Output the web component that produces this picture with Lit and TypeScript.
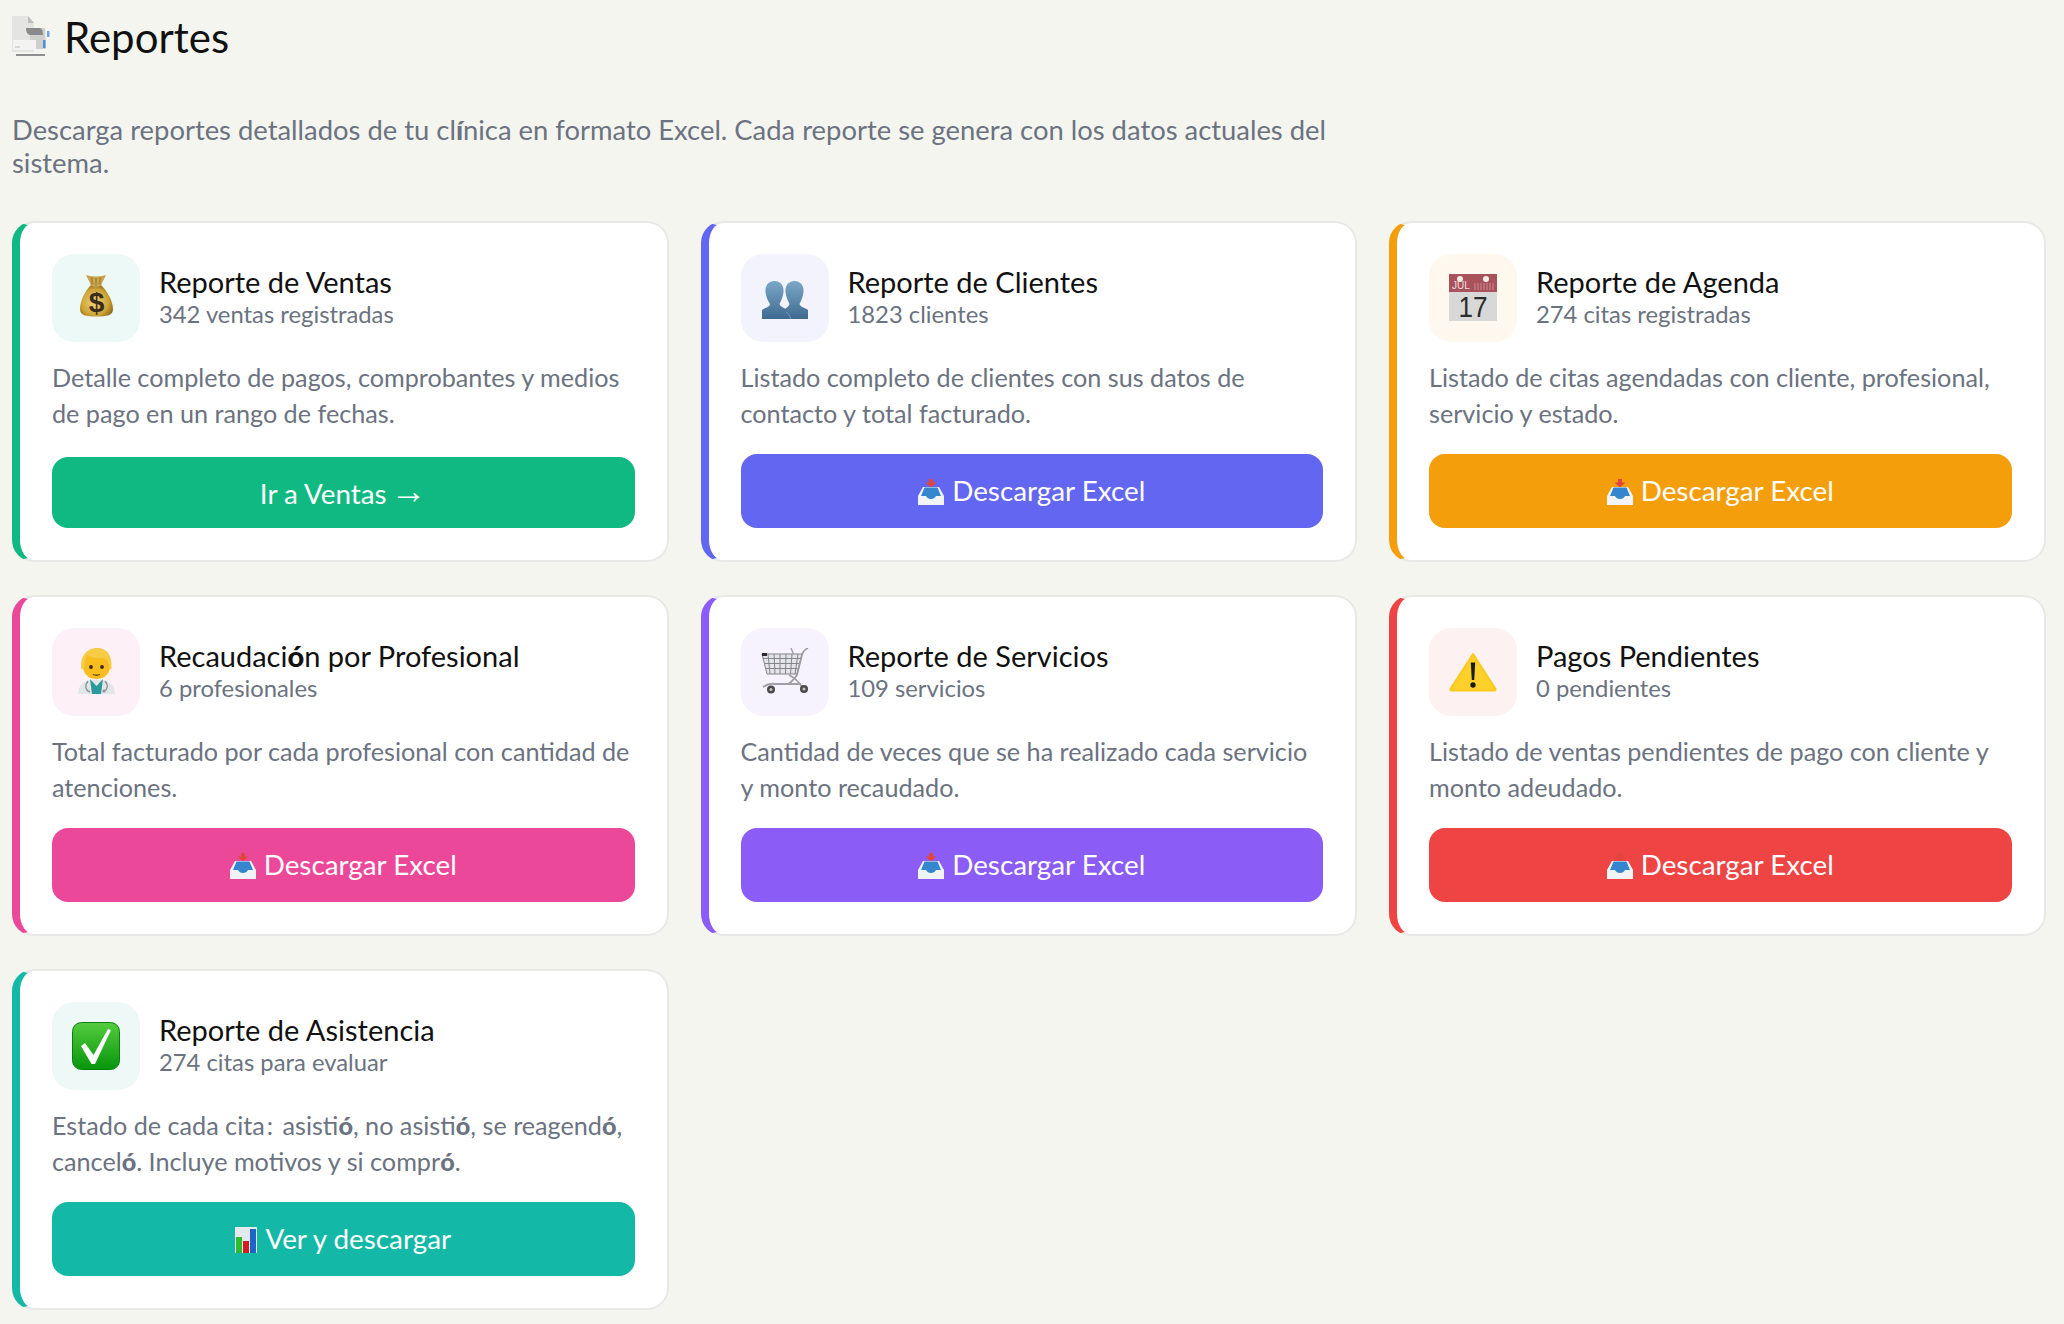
import { LitElement, html, css, svg, nothing } from "lit";
import { customElement } from "lit/decorators.js";

const fb = (s: string) =>
  s.split(/([óí:])/).map((p) =>
    p === ":" ? html`<span class="colon">:</span>` : p === "ó" || p === "í" ? html`<span class="fb">${p}</span>` : p
  );

const icons: Record<string, unknown> = {
  money: svg`<defs><radialGradient id="mb" cx="45%" cy="55%" r="60%"><stop offset="0" stop-color="#efd47c"/><stop offset=".7" stop-color="#cda235"/><stop offset="1" stop-color="#8f6a1a"/></radialGradient></defs>
    <path d="M14 1 Q24 4 34 1 L29 11 Q24 13 19 11Z" fill="#c9a24a"/><path d="M20 3v8M24 4v8M28 3v8" stroke="#8f6f2a" stroke-width=".8"/>
    <path d="M19 11 Q24 13.500 29 11 C34 16 41 26 41 35 C41 41.500 35 42.500 24.500 42.500 C14 42.500 8 41.500 8 35 C8 26 14 16 19 11Z" fill="url(#mb)"/>
    <text x="24.500" y="37.500" text-anchor="middle" font-family="Liberation Sans" font-weight="700" font-size="28" fill="#3a2c1c">$</text>`,
  people: svg`<defs><linearGradient id="pp" x1="0" y1="0" x2="0" y2="1"><stop offset="0" stop-color="#7ba8c8"/><stop offset="1" stop-color="#3f6a90"/></linearGradient></defs>
    <path d="M13.500 7 C20 7 23 12 22.500 18 C22 23 20 27 18.500 30 C19 33 25 34.500 26 36 V45 H1 V36 C3 34 9 33 9 30 C7 27 5 23 4.500 18 C4 12 7 7 13.500 7Z" fill="url(#pp)"/>
    <path d="M33.500 7 C40 7 43 12 42.500 18 C42 23 40 27 38.500 30 C39 33 45 34 47 36 V45 H21 V37 C23 35 28 33 28.500 30 C27 27 25 23 24.500 18 C24 12 27 7 33.500 7Z" fill="url(#pp)"/>
    <path d="M25 38 Q28 39 30 45" stroke="#8fb3cc" stroke-width=".6" fill="none"/>`,
  calendar: svg`<rect x="0" y="0" width="48" height="47" fill="#d8d8d9"/><rect x="0" y="0" width="48" height="18" fill="#a9525c"/>
    <circle cx="11" cy="5" r="3" fill="#f3ece4"/><circle cx="37" cy="5" r="3" fill="#f3ece4"/>
    <text x="3" y="15" font-family="Liberation Sans" font-size="10" fill="#f1dcdc">JUL</text>
    <path d="M26 9v7M29 9v7M32 9v7M35 9v7M38 9v7M41 9v7M44 9v7" stroke="#c98a92" stroke-width="1"/>
    <text x="24" y="43" text-anchor="middle" font-family="Liberation Sans" font-size="30" fill="#2c2c2c" textLength="29" lengthAdjust="spacingAndGlyphs">17</text>`,
  doctor: svg`<path d="M6 46 C6 38 11 33.500 18 32 L31 32 C38 33.500 43 38 43 46Z" fill="#e3e6e7"/><path d="M18 31 L24.500 38 L31 31 L29 46 L20 46Z" fill="#2d9a9a"/>
    <path d="M16 33 C12 38 14 43 18 44 M33 33 C37 38 35 42 32 43" stroke="#8a9299" stroke-width="1.300" fill="none"/><circle cx="32" cy="43" r="1.600" fill="#8a9299"/>
    <path d="M10.500 16 C10.500 7 17 2 25 2 C33 2 38.500 7 38.500 16 C38.500 25 33 31 24.500 31 C16 31 10.500 25 10.500 16Z" fill="#f9bd1f"/>
    <path d="M9.500 21 C7.500 7 16 0 25 0 C35 0 40.500 7 39.500 21 L37.500 21 C37 13 34 10 30 10 C24 11 19 9.500 15 7 C14 10 12.500 15 12 21Z" fill="#f6cb46"/>
    <circle cx="19" cy="19" r="1.900" fill="#3a2a14"/><circle cx="30" cy="19" r="1.900" fill="#3a2a14"/>
    <path d="M21 26.500 Q24.500 28 28 26.500" stroke="#6b4310" stroke-width="1.300" fill="none"/>`,
  cart: svg`<g stroke="#85858c" fill="none" stroke-width="1">
    <path d="M1 6 L41 6 L36 26 L6 26Z" fill="#e4e4ea"/>
    <path d="M7 6 L9 26M13 6 L14 26M19 6 L19 26M25 6 L24.500 26M31 6 L29.500 26M37 6 L34 26"/>
    <path d="M2 10.500 H40M3 15.500 H39M4.500 20.500 H37.500"/></g>
    <path d="M30 0 L32.500 6" stroke="#9a9aa0" stroke-width="1.300" fill="none"/>
    <path d="M47 0 Q42.500 2 41 7 L36 27 Q31 34 27 36" stroke="#9a9aa0" stroke-width="1.700" fill="none"/>
    <path d="M2 39 Q8 35 14 36 L40 36" stroke="#a0a0a6" stroke-width="1.900" fill="none"/>
    <path d="M28 27 Q36 31 41 39" stroke="#a0a0a6" stroke-width="1.700" fill="none"/>
    <rect x="1" y="5" width="5" height="3" fill="#2a2a30"/>
    <circle cx="10" cy="41.500" r="4" fill="#4a4a4c"/><circle cx="10" cy="41.500" r="1.500" fill="#c8c8c8"/>
    <circle cx="43" cy="41" r="4" fill="#4a4a4c"/><circle cx="43" cy="41" r="1.500" fill="#c8c8c8"/>`,
  warning: svg`<path d="M24 6 L46.500 41 Q47 42.500 45 42.500 L3 42.500 Q1 42.500 1.500 41 Z" fill="#fdd02a" stroke="#fbc91c" stroke-width="2" stroke-linejoin="round"/>
    <path d="M21.800 14.500 H26.200 L25.200 32 H22.800Z" fill="#1a1a1a"/><circle cx="24" cy="37" r="2.700" fill="#1a1a1a"/>`,
  check: svg`<defs><linearGradient id="ck" x1="0" y1="0" x2="0" y2="1"><stop offset="0" stop-color="#54cc3e"/><stop offset="1" stop-color="#08950c"/></linearGradient></defs>
    <rect x=".5" y=".5" width="47" height="47" rx="9" fill="url(#ck)" stroke="#0a7d10"/>
    <path d="M9 24 L13 21 L21.500 33 L36 7 L39 8 L23 42 L19.500 42Z" fill="#fff"/>`,
  inbox: svg`<path d="M11 0h4v3.500h3.500L13 8.500 7.500 3.500H11z" fill="#e2453c"/>
    <path d="M5 8 H21 L26 17 V26 H0 V17Z" fill="#f1f4f7"/>
    <path d="M6.500 8.500 H19.500 L23 17 H18 Q16.500 20 13 20 Q9.500 20 8 17 H3Z" fill="#3586cf"/>`,
  chart: svg`<rect width="22" height="26" fill="#e5e8ec"/><rect x="1" y="10" width="6" height="16" fill="#2fbb2f"/><rect x="8" y="14" width="6" height="12" fill="#d11f1f"/><rect x="15" y="2" width="6" height="24" fill="#1f63c4"/>`,
  header: svg`<path d="M0 0H16L22 7V36H0Z" fill="#e4e4e3"/><path d="M16 0L22 7H16Z" fill="#bdbdbc"/>
    <path d="M18 12H33L34 33H18Z" fill="#cfcfce"/><path d="M4 38H33V40H4Z" fill="#8f8f8f"/>
    <path d="M14 12H28Q31 13 31 19H18Q14 18 14 12Z" fill="#8a8a8a"/>
    <path d="M1 24H24V34H1Z" fill="#f3f3f2"/><path d="M3 31H8" stroke="#bbb" stroke-width="1"/>
    <rect x="35" y="15" width="2.500" height="6" fill="#6aa6e8"/><rect x="31" y="24" width="2.500" height="8" fill="#4d8fe0"/>`,
};

const ic = (name: string, w: number, h: number) =>
  html`<svg width=${w} height=${h} viewBox="0 0 ${w} ${h}" aria-hidden="true">${icons[name]}</svg>`;

interface Card { color: string; tint: string; icon: string; title: string; sub: string; desc: string; label: string; btn: string; link?: boolean; }

const cards: Card[] = [
  { color: "#10b981", tint: "#ecf9f6", icon: "money", title: "Reporte de Ventas", sub: "342 ventas registradas", desc: "Detalle completo de pagos, comprobantes y medios de pago en un rango de fechas.", label: "Ir a Ventas", btn: "", link: true },
  { color: "#6366f1", tint: "#f3f3fe", icon: "people", title: "Reporte de Clientes", sub: "1823 clientes", desc: "Listado completo de clientes con sus datos de contacto y total facturado.", label: "Descargar Excel", btn: "inbox" },
  { color: "#f59e0b", tint: "#fef8ee", icon: "calendar", title: "Reporte de Agenda", sub: "274 citas registradas", desc: "Listado de citas agendadas con cliente, profesional, servicio y estado.", label: "Descargar Excel", btn: "inbox" },
  { color: "#ec4899", tint: "#fdf1f7", icon: "doctor", title: "Recaudación por Profesional", sub: "6 profesionales", desc: "Total facturado por cada profesional con cantidad de atenciones.", label: "Descargar Excel", btn: "inbox" },
  { color: "#8b5cf6", tint: "#f6f2fe", icon: "cart", title: "Reporte de Servicios", sub: "109 servicios", desc: "Cantidad de veces que se ha realizado cada servicio y monto recaudado.", label: "Descargar Excel", btn: "inbox" },
  { color: "#ef4444", tint: "#fef1f1", icon: "warning", title: "Pagos Pendientes", sub: "0 pendientes", desc: "Listado de ventas pendientes de pago con cliente y monto adeudado.", label: "Descargar Excel", btn: "inbox" },
  { color: "#14b8a6", tint: "#edf8f7", icon: "check", title: "Reporte de Asistencia", sub: "274 citas para evaluar", desc: "Estado de cada cita: asistió, no asistió, se reagendó, canceló. Incluye motivos y si compró.", label: "Ver y descargar", btn: "chart" },
];

@customElement("app-root")
export class AppRoot extends LitElement {
  static styles = css`
    :host { display: block; min-height: 1324px; box-sizing: border-box; background: #f5f5f0; padding: 12px 18.5px 0 12px; font-family: "Lato", "Noto Sans", sans-serif; }
    .fb { font-weight: 900; }
    .colon { margin: 0 3px 0 2px; }
    h1 { margin: 0 0 51px; display: flex; align-items: center; gap: 12px; height: 50px; font-size: 42px; font-weight: 400; color: #111; }
    .lead { margin: 0 0 42px; max-width: 1340px; font-size: 27.4px; line-height: 33px; color: #6b7280; }
    .grid { display: grid; grid-template-columns: repeat(3, 1fr); gap: 33px 32px; }
    .card { box-sizing: border-box; height: 341px; display: flex; flex-direction: column; background: #fff; border: 2px solid #e8e8e6; border-left: 8px solid var(--c); border-radius: 22px; padding: 31px 32px 32px 32px; }
    .head { display: flex; align-items: center; gap: 19px; margin-bottom: 17px; }
    .tile { flex: none; width: 88px; height: 88px; border-radius: 22px; display: flex; align-items: center; justify-content: center; }
    .text { padding-bottom: 4px; }
    .title { font-size: 29px; line-height: 36px; color: #111; }
    .sub { font-size: 23.8px; line-height: 29px; color: #6b7280; }
    .desc { margin: 0 0 22px; font-size: 25.2px; line-height: 36px; color: #6b7280; }
    .btn { box-sizing: border-box; margin-top: auto; height: 74px; padding-bottom: 1px; display: flex; align-items: center; justify-content: center; gap: 8px; border-radius: 16px; color: #fff; font-size: 27.8px; text-decoration: none; }
    .btn.link { height: 71px; padding-bottom: 2px; }
    .btn svg { margin-top: 2px; }
    .arrow { font-family: "Liberation Serif", serif; font-size: 36px; line-height: 1; vertical-align: 1px; margin-left: -3px; }
  `;

  render() {
    return html`
      <h1>${ic("header", 40, 42)}<span>Reportes</span></h1>
      <p class="lead">${fb("Descarga reportes detallados de tu clínica en formato Excel. Cada reporte se genera con los datos actuales del sistema.")}</p>
      <div class="grid">
        ${cards.map((c) => html`
          <div class="card" style="--c:${c.color}">
            <div class="head">
              <div class="tile" style="background:${c.tint}">${ic(c.icon, 48, 48)}</div>
              <div class="text"><div class="title">${fb(c.title)}</div><div class="sub">${c.sub}</div></div>
            </div>
            <p class="desc">${fb(c.desc)}</p>
            <a class="btn ${c.link ? "link" : ""}" style="background:${c.color}">
              ${c.btn ? ic(c.btn, c.btn === "chart" ? 22 : 26, 26) : nothing}<span>${c.label}${c.link ? html` <span class="arrow">→</span>` : nothing}</span>
            </a>
          </div>`)}
      </div>`;
  }
}
